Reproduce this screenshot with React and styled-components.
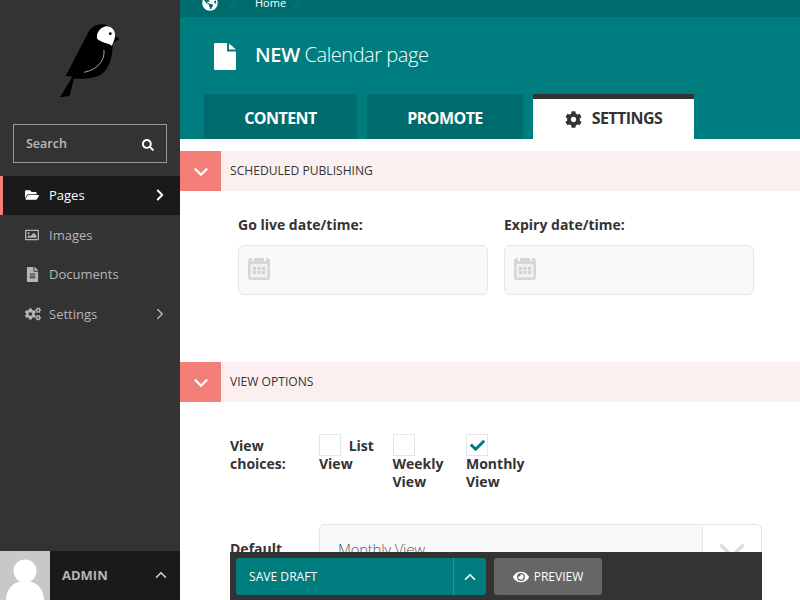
import React from 'react';
import styled, { createGlobalStyle } from 'styled-components';
import { FaSearch, FaFolderOpen, FaRegImage, FaFileAlt, FaCogs, FaCog, FaEye, FaCheck, FaGlobeAmericas } from 'react-icons/fa';
import { ChevronRight, ChevronDown, ChevronUp } from 'lucide-react';

const Global = createGlobalStyle`
  html, body { margin: 0; padding: 0; height: 600px; overflow: hidden; background: #fff; }
  * { box-sizing: border-box; }
  body { font-family: "Open Sans", sans-serif; color: #333; }
`;

const Page = styled.div`
  display: flex;
  width: 800px;
  height: 600px;
  overflow: hidden;
`;

const Sidebar = styled.aside`
  width: 180px;
  flex: none;
  background: #333;
  display: flex;
  flex-direction: column;
`;

const Logo = styled.div`
  height: 124px;
  padding: 20px 0 0 55px;
`;

const SearchBox = styled.div`
  margin: 0 13px 13px;
  height: 39px;
  border: 1px solid #999;
  display: flex;
  align-items: center;
  justify-content: space-between;
  padding: 0 12px;
  color: #bbb;
  font-size: 12.5px;
  font-weight: 600;
  svg { color: #fff; font-size: 12px; margin-top: 2px; }
`;

const MenuItem = styled.div`
  height: ${p => p.$h}px;
  flex: none;
  display: flex;
  align-items: center;
  padding: 0 11px ${p => (p.$h === 39 ? 1 : 0)}px ${p => (p.$active ? 22 : 25)}px;
  font-size: 13px;
  color: ${p => (p.$active ? '#fff' : '#b5b5b5')};
  background: ${p => (p.$active ? '#1a1a1a' : 'transparent')};
  border-left: ${p => (p.$active ? '3px solid #f37e77' : '0')};
`;

const MenuIcon = styled.span`
  width: 24px;
  display: flex;
  align-items: center;
  font-size: ${p => p.$size || 14}px;
`;

const MenuLabel = styled.span`
  flex: 1;
`;

const SidebarFooter = styled.div`
  margin-top: auto;
  height: 49px;
  background: #1a1a1a;
  display: flex;
  align-items: center;
  color: #b5b5b5;
  font-size: 13px;
  font-weight: 700;
`;

const Avatar = styled.div`
  width: 50px;
  height: 49px;
  background: #c8c8c8;
  margin-right: 12px;
  overflow: hidden;
  svg { display: block; }
`;

const AdminName = styled.span`
  flex: 1;
  padding-bottom: 2px;
`;

const AdminToggle = styled.span`
  display: flex;
  padding: 0 10px 2px 0;
  color: #ccc;
`;

const Main = styled.main`
  flex: 1;
  min-width: 0;
`;

const Breadcrumb = styled.div`
  height: 17px;
  background: #006b6c;
  display: flex;
  align-items: flex-end;
  overflow: hidden;
  padding: 0 0 4px 22px;
  color: #fff;
  font-size: 11px;
  line-height: 20px;
`;

const Crumb = styled.span`
  display: flex;
  align-items: center;
  flex: none;
  height: 20px;
  margin-right: ${p => p.$gap}px;
`;

const CrumbArrow = styled(ChevronRight)`
  color: #007d7e;
  flex: none;
`;

const Header = styled.header`
  height: 122px;
  background: #007d7e;
  padding: 26px 0 0 24px;
  display: flex;
  flex-direction: column;
`;

const TitleRow = styled.div`
  display: flex;
  align-items: center;
  height: 27px;
  padding-left: 10px;
  color: #fff;
  font-size: 20px;
  font-weight: 300;
  svg { margin-right: 19px; flex: none; }
`;

const TitleText = styled.span`
  padding-bottom: 4px;
  letter-spacing: -.45px;
  strong { font-weight: 600; letter-spacing: -.3px; }
`;

const Tabs = styled.div`
  display: flex;
  gap: 10px;
  margin-top: 24px;
`;

const Tab = styled.div`
  width: ${p => p.$w}px;
  height: 45px;
  background: ${p => (p.$active ? '#fff' : '#006b6c')};
  border-top: ${p => (p.$active ? '5px solid #333' : '0')};
  color: ${p => (p.$active ? '#333' : '#fff')};
  padding: ${p => (p.$active ? '0 0 2px' : '3px 0 0')};
  font-size: 16px;
  font-weight: 700;
  letter-spacing: -.55px;
  display: flex;
  align-items: center;
  justify-content: center;
  svg { font-size: 17px; margin-right: 10px; margin-top: 3px; }
`;

const Section = styled.section`
  margin-top: ${p => p.$top}px;
`;

const SectionHead = styled.div`
  height: 40px;
  background: #fbf0ef;
  display: flex;
  align-items: center;
  font-size: 12.1px;
  color: #333;
`;

const SectionTitle = styled.span`
  padding-bottom: 2px;
`;

const SectionToggle = styled.span`
  width: 41px;
  height: 40px;
  background: #f37e77;
  color: #fff;
  display: flex;
  align-items: center;
  justify-content: center;
  margin-right: 9px;
  padding-top: 2px;
`;

const DateFields = styled.div`
  display: flex;
  gap: 16px;
  padding: 25px 0 67px 58px;
`;

const Field = styled.div`
  width: 250px;
`;

const FieldLabel = styled.label`
  display: block;
  font-size: 14px;
  font-weight: 700;
  line-height: 18px;
  margin-bottom: 11px;
`;

const DateInput = styled.div`
  height: 50px;
  background: #f9f9f9;
  border: 1px solid #e6e6e6;
  border-radius: 6px;
  padding: 11px 0 0 9px;
  svg { display: block; }
`;

const ViewOptions = styled.div`
  padding: 32px 38px 0 50px;
`;

const ChoiceRow = styled.div`
  display: flex;
  font-size: 14px;
  font-weight: 700;
  line-height: 18px;
`;

const ChoiceLabel = styled.div`
  width: 89px;
  flex: none;
  padding-top: 3px;
`;

const ChoiceList = styled.div`
  display: flex;
  padding-top: 3px;
`;

const Choice = styled.div`
  width: 73.5px;
  padding-right: 14px;
`;

const CheckBox = styled.span`
  display: inline-flex;
  align-items: center;
  justify-content: center;
  width: 22px;
  height: 22px;
  border: 1px solid #e6e6e6;
  background: #fff;
  margin: -3px 4px -1px 0;
  vertical-align: top;
  color: #007d7e;
  font-size: 15px;
`;

const SelectRow = styled.div`
  display: flex;
  margin-top: 33px;
  font-size: 14px;
  font-weight: 700;
  line-height: 18px;
`;

const SelectLabel = styled(ChoiceLabel)`
  padding-top: 16px;
`;

const Select = styled.div`
  flex: 1;
  height: 50px;
  background: #f9f9f9;
  border: 1px solid #e6e6e6;
  border-radius: 6px 6px 0 0;
  display: flex;
  font-size: 15px;
  font-weight: 300;
  color: #4d5f6b;
`;

const SelectValue = styled.span`
  flex: 1;
  padding: 14px 0 0 18px;
  line-height: 20px;
  letter-spacing: -.25px;
`;

const SelectArrow = styled.span`
  width: 59px;
  background: #fff;
  border-left: 1px solid #e6e6e6;
  border-radius: 0 6px 0 0;
  color: #ddd;
  display: flex;
  justify-content: center;
  padding-top: 5px;
`;

const ActionBar = styled.div`
  position: fixed;
  left: 230px;
  top: 552px;
  width: 532px;
  height: 48px;
  background: #333;
  padding: 6px;
  display: flex;
  gap: 8px;
`;

const SaveButton = styled.div`
  width: 250px;
  height: 37px;
  background: #007d7e;
  border-radius: 3px;
  color: #fff;
  font-size: 12.1px;
  display: flex;
  align-items: center;
`;

const SaveLabel = styled.span`
  flex: 1;
  padding-left: 13px;
`;

const SaveToggle = styled.span`
  width: 33px;
  height: 37px;
  border-left: 1px solid #2a9596;
  display: flex;
  align-items: center;
  justify-content: center;
`;

const PreviewButton = styled.div`
  width: 108px;
  height: 37px;
  background: #666;
  border-radius: 3px;
  color: #fff;
  font-size: 12px;
  display: flex;
  align-items: center;
  justify-content: center;
  svg { font-size: 16px; margin-right: 5px; }
`;

function Bird() {
  return (
    <svg width="70" height="80" viewBox="55 20 70 80">
      <path
        fill="#000"
        d="M60 97.3 L69.5 96 L74 78.5 C82 79 93 79 101 74.5 C108 70 112 60 112.5 48 L113 43 L119.5 39 L115 36 C114 29 109 25 104 24.3 C97 23.6 91 27 88 33 L65.7 76 L72.5 76.5 Z"
      />
      <path
        fill="#fff"
        d="M97 38.5 C96.5 32 100 28 105 26.5 C110 25.5 114.5 29 115 34 C115.5 39 113 42 112 46 C108 42.5 101 43 97 38.5 Z"
      />
      <circle cx="110.3" cy="33.7" r="1.4" fill="#000" />
      <path fill="none" stroke="#ccc" strokeWidth=".8" d="M104 50 C105 62 96 70 84 72.3" />
    </svg>
  );
}

function PageIcon() {
  return (
    <svg width="22" height="27" viewBox="0 0 22 27">
      <path fill="#fff" d="M1 0 H13 V8.5 H22 V26 Q22 27 21 27 H1 Q0 27 0 26 V1 Q0 0 1 0 Z" />
      <path fill="#fff" d="M15 0.5 L22 6.5 H15 Z" />
    </svg>
  );
}

function CalendarIcon() {
  return (
    <svg width="22" height="23" viewBox="0 0 22 23">
      <rect x="0" y="1" width="22" height="22" rx="3" fill="#d6d6d6" />
      <rect x="2.5" y="7" width="17" height="13.5" fill="#f0f0f0" />
      <rect x="4" y="0" width="2" height="4" fill="#f9f9f9" />
      <rect x="16" y="0" width="2" height="4" fill="#f9f9f9" />
      {[5, 9.5, 14].map(x => [10, 14].map(y => (
        <rect key={`${x}-${y}`} x={x} y={y} width="3" height="3" fill="#d0d0d0" />
      )))}
    </svg>
  );
}

function AvatarIcon() {
  return (
    <svg width="50" height="49" viewBox="0 0 50 49">
      <circle cx="25" cy="20" r="11.5" fill="#fff" />
      <path fill="#fff" d="M6 49 C6 38 13 30 25 30 C37 30 44 38 44 49 Z" />
    </svg>
  );
}

export default function App() {
  return (
    <Page>
      <Global />
      <Sidebar>
        <Logo><Bird /></Logo>
        <SearchBox>Search<FaSearch /></SearchBox>
        <MenuItem $active $h={39}>
          <MenuIcon><FaFolderOpen /></MenuIcon>
          <MenuLabel>Pages</MenuLabel>
          <ChevronRight size={18} strokeWidth={2.5} />
        </MenuItem>
        <MenuItem $h={40}>
          <MenuIcon><FaRegImage /></MenuIcon>
          <MenuLabel>Images</MenuLabel>
        </MenuItem>
        <MenuItem $h={39}>
          <MenuIcon $size={15}><FaFileAlt /></MenuIcon>
          <MenuLabel>Documents</MenuLabel>
        </MenuItem>
        <MenuItem $h={40}>
          <MenuIcon $size={16}><FaCogs /></MenuIcon>
          <MenuLabel>Settings</MenuLabel>
          <ChevronRight size={18} />
        </MenuItem>
        <SidebarFooter>
          <Avatar><AvatarIcon /></Avatar>
          <AdminName>ADMIN</AdminName>
          <AdminToggle><ChevronUp size={18} strokeWidth={2.25} /></AdminToggle>
        </SidebarFooter>
      </Sidebar>

      <Main>
        <Breadcrumb>
          <Crumb $gap={6}><FaGlobeAmericas size={16} /></Crumb>
          <Crumb $gap={13}><CrumbArrow size={18} /></Crumb>
          <Crumb $gap={2}>Home</Crumb>
          <Crumb $gap={0}><CrumbArrow size={18} /></Crumb>
        </Breadcrumb>
        <Header>
          <TitleRow>
            <PageIcon />
            <TitleText><strong>NEW</strong> Calendar page</TitleText>
          </TitleRow>
          <Tabs>
            <Tab $w={153}>CONTENT</Tab>
            <Tab $w={156}>PROMOTE</Tab>
            <Tab $w={161} $active><FaCog />SETTINGS</Tab>
          </Tabs>
        </Header>

        <Section $top={12}>
          <SectionHead>
            <SectionToggle><ChevronDown size={22} strokeWidth={2.5} /></SectionToggle>
            <SectionTitle>SCHEDULED PUBLISHING</SectionTitle>
          </SectionHead>
          <DateFields>
            <Field>
              <FieldLabel>Go live date/time:</FieldLabel>
              <DateInput><CalendarIcon /></DateInput>
            </Field>
            <Field>
              <FieldLabel>Expiry date/time:</FieldLabel>
              <DateInput><CalendarIcon /></DateInput>
            </Field>
          </DateFields>
        </Section>

        <Section $top={0}>
          <SectionHead>
            <SectionToggle><ChevronDown size={22} strokeWidth={2.5} /></SectionToggle>
            <SectionTitle>VIEW OPTIONS</SectionTitle>
          </SectionHead>
          <ViewOptions>
            <ChoiceRow>
              <ChoiceLabel>View choices:</ChoiceLabel>
              <ChoiceList>
                <Choice><CheckBox /> List View</Choice>
                <Choice><CheckBox /> Weekly View</Choice>
                <Choice><CheckBox><FaCheck /></CheckBox> Monthly View</Choice>
              </ChoiceList>
            </ChoiceRow>
            <SelectRow>
              <SelectLabel>Default view:</SelectLabel>
              <Select>
                <SelectValue>Monthly View</SelectValue>
                <SelectArrow><ChevronDown size={42} strokeWidth={2} /></SelectArrow>
              </Select>
            </SelectRow>
          </ViewOptions>
        </Section>
      </Main>

      <ActionBar>
        <SaveButton>
          <SaveLabel>SAVE DRAFT</SaveLabel>
          <SaveToggle><ChevronUp size={18} strokeWidth={2.25} /></SaveToggle>
        </SaveButton>
        <PreviewButton><FaEye />PREVIEW</PreviewButton>
      </ActionBar>
    </Page>
  );
}
